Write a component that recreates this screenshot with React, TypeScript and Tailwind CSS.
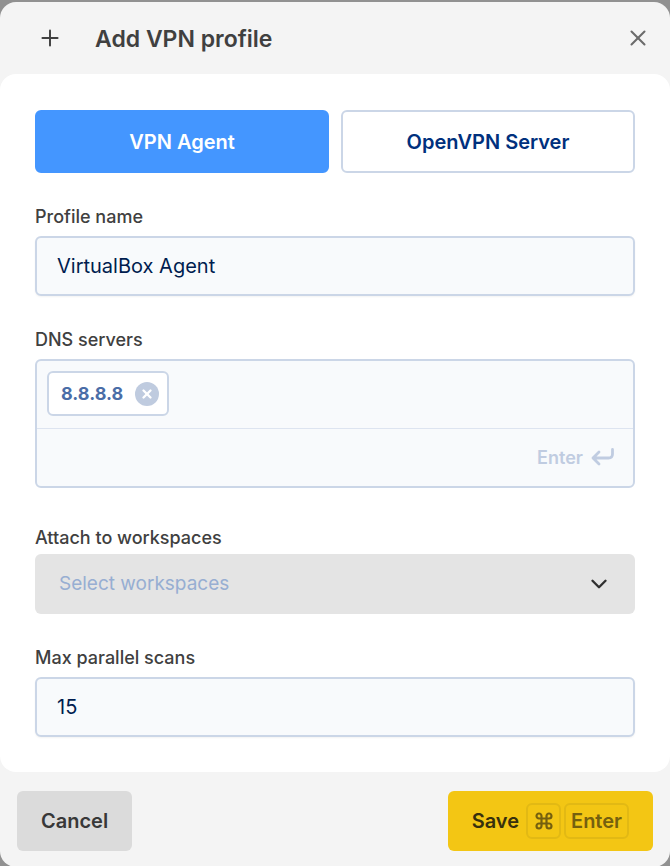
import { useState } from "react";
import { ChevronDown, Command, Plus, X } from "lucide-react";

const labelClass = "block text-[18px] leading-6 font-medium text-[#404040]";
const inputClass =
  "block w-full h-[60px] px-5 rounded-md border-2 border-[#cbd6e7] bg-[#f8fafc] text-[20px] text-[#001d4f] shadow-xs outline-none";

export default function App() {
  const [mode, setMode] = useState("agent");
  const [name, setName] = useState("VirtualBox Agent");
  const [servers, setServers] = useState(["8.8.8.8"]);
  const [draft, setDraft] = useState("");
  const [scans, setScans] = useState("15");

  const addServer = () => {
    if (!draft.trim()) return;
    setServers([...servers, draft.trim()]);
    setDraft("");
  };

  const active = "bg-[#4496ff] border-[#4496ff] text-white";
  const inactive = "bg-white border-[#cbd6e7] text-[#00307d]";

  return (
    <main className="min-h-screen bg-[#919191] pt-0.5 font-['Inter','Liberation_Sans',sans-serif]">
      <div className="rounded-2xl bg-[#f4f4f4]">
        {/* Header */}
        <header className="h-18 flex items-center pl-[37px] pr-[19px]">
          <Plus size={26} strokeWidth={1.8} className="text-[#404040]" />
          <h1 className="ml-8 pt-0.5 flex-1 text-[23px] leading-8 font-semibold text-[#404040]">Add VPN profile</h1>
          <button type="button" aria-label="Close" className="text-[#6b6b6b]">
            <X size={26} strokeWidth={1.9} />
          </button>
        </header>

        {/* Form */}
        <section className="rounded-2xl bg-white px-[35px] pt-9 pb-[35px]">
          <div className="grid grid-cols-2 gap-3 text-[20px] font-semibold">
            <button
              type="button"
              onClick={() => setMode("agent")}
              className={`h-[63px] rounded-md border-2 ${mode === "agent" ? active : inactive}`}
            >
              VPN Agent
            </button>
            <button
              type="button"
              onClick={() => setMode("server")}
              className={`h-[63px] rounded-md border-2 ${mode === "server" ? active : inactive}`}
            >
              OpenVPN Server
            </button>
          </div>

          <div className="mt-8 flex flex-col gap-[7px]">
            <label htmlFor="name" className={labelClass}>Profile name</label>
            <input id="name" className={inputClass} value={name} onChange={(e) => setName(e.target.value)} />
          </div>

          <div className="mt-8 flex flex-col gap-[7px]">
            <label htmlFor="dns" className={labelClass}>DNS servers</label>
            <div className="rounded-md border-2 border-[#cbd6e7] bg-[#f8fafc]">
              <div className="flex flex-wrap gap-2 px-2.5 pt-2.5 pb-3">
                {servers.map((server) => (
                  <span
                    key={server}
                    className="h-[45px] flex items-center gap-3 pl-3 pr-2 rounded-md border-2 border-[#cbd6e7] bg-white text-[18px] font-bold text-[#4a6da7]"
                  >
                    {server}
                    <button
                      type="button"
                      aria-label={`Remove ${server}`}
                      onClick={() => setServers(servers.filter((s) => s !== server))}
                      className="size-6 rounded-full bg-[#bfcbdf] text-white flex items-center justify-center"
                    >
                      <X size={14} strokeWidth={4} />
                    </button>
                  </span>
                ))}
              </div>
              <div className="h-[58px] flex items-center border-t border-[#dde4f0] pl-5 pr-[18px]">
                <input
                  id="dns"
                  className="flex-1 min-w-0 bg-transparent text-[20px] text-[#001d4f] outline-none"
                  value={draft}
                  onChange={(e) => setDraft(e.target.value)}
                  onKeyDown={(e) => e.key === "Enter" && addServer()}
                />
                <button
                  type="button"
                  onClick={addServer}
                  className="flex items-center gap-2 text-[18px] font-semibold text-[#c0cce1]"
                >
                  Enter
                  <svg
                    width="24"
                    height="20"
                    viewBox="0 0 24 20"
                    fill="none"
                    stroke="currentColor"
                    strokeWidth="2.8"
                    strokeLinecap="round"
                    strokeLinejoin="round"
                  >
                    <path d="M21.5 1.5V6Q21.5 10 17.5 10H2M8 4L2 10L8 16" />
                  </svg>
                </button>
              </div>
            </div>
          </div>

          <div className="mt-[38px] flex flex-col gap-1">
            <label htmlFor="workspaces" className={labelClass}>Attach to workspaces</label>
            <div className="grid items-center">
              <select
                id="workspaces"
                disabled
                defaultValue=""
                className="col-start-1 row-start-1 w-full h-[60px] px-6 appearance-none rounded-md bg-[#e4e4e4] text-[19px] text-[#97aed2] opacity-100"
              >
                <option value="">Select workspaces</option>
              </select>
              <ChevronDown
                size={26}
                strokeWidth={2.2}
                className="col-start-1 row-start-1 justify-self-end mr-[23px] pointer-events-none text-[#303030]"
              />
            </div>
          </div>

          <div className="mt-8 flex flex-col gap-[7px]">
            <label htmlFor="scans" className={labelClass}>Max parallel scans</label>
            <input
              id="scans"
              inputMode="numeric"
              className={inputClass}
              value={scans}
              onChange={(e) => setScans(e.target.value)}
            />
          </div>
        </section>

        {/* Footer */}
        <footer className="flex items-center justify-between px-[17px] pt-[19px] pb-4 text-[20px] font-semibold">
          <button type="button" className="h-[60px] px-6 rounded-md bg-[#dbdbdb] text-[#383838]">
            Cancel
          </button>
          <button
            type="button"
            className="h-[60px] px-6 rounded-md bg-[#f3c614] text-[#37300d] flex items-center gap-[3px]"
          >
            <span className="mr-1">Save</span>
            <kbd className="w-[35px] h-9 rounded-md border-2 border-[#e2b914] flex items-center justify-center text-[#75600f]">
              <Command size={20} strokeWidth={2.6} />
            </kbd>
            <kbd className="h-9 px-[5px] rounded-md border-2 border-[#e2b914] flex items-center font-['Inter',sans-serif] text-[#75600f]">
              Enter
            </kbd>
          </button>
        </footer>
      </div>
    </main>
  );
}
